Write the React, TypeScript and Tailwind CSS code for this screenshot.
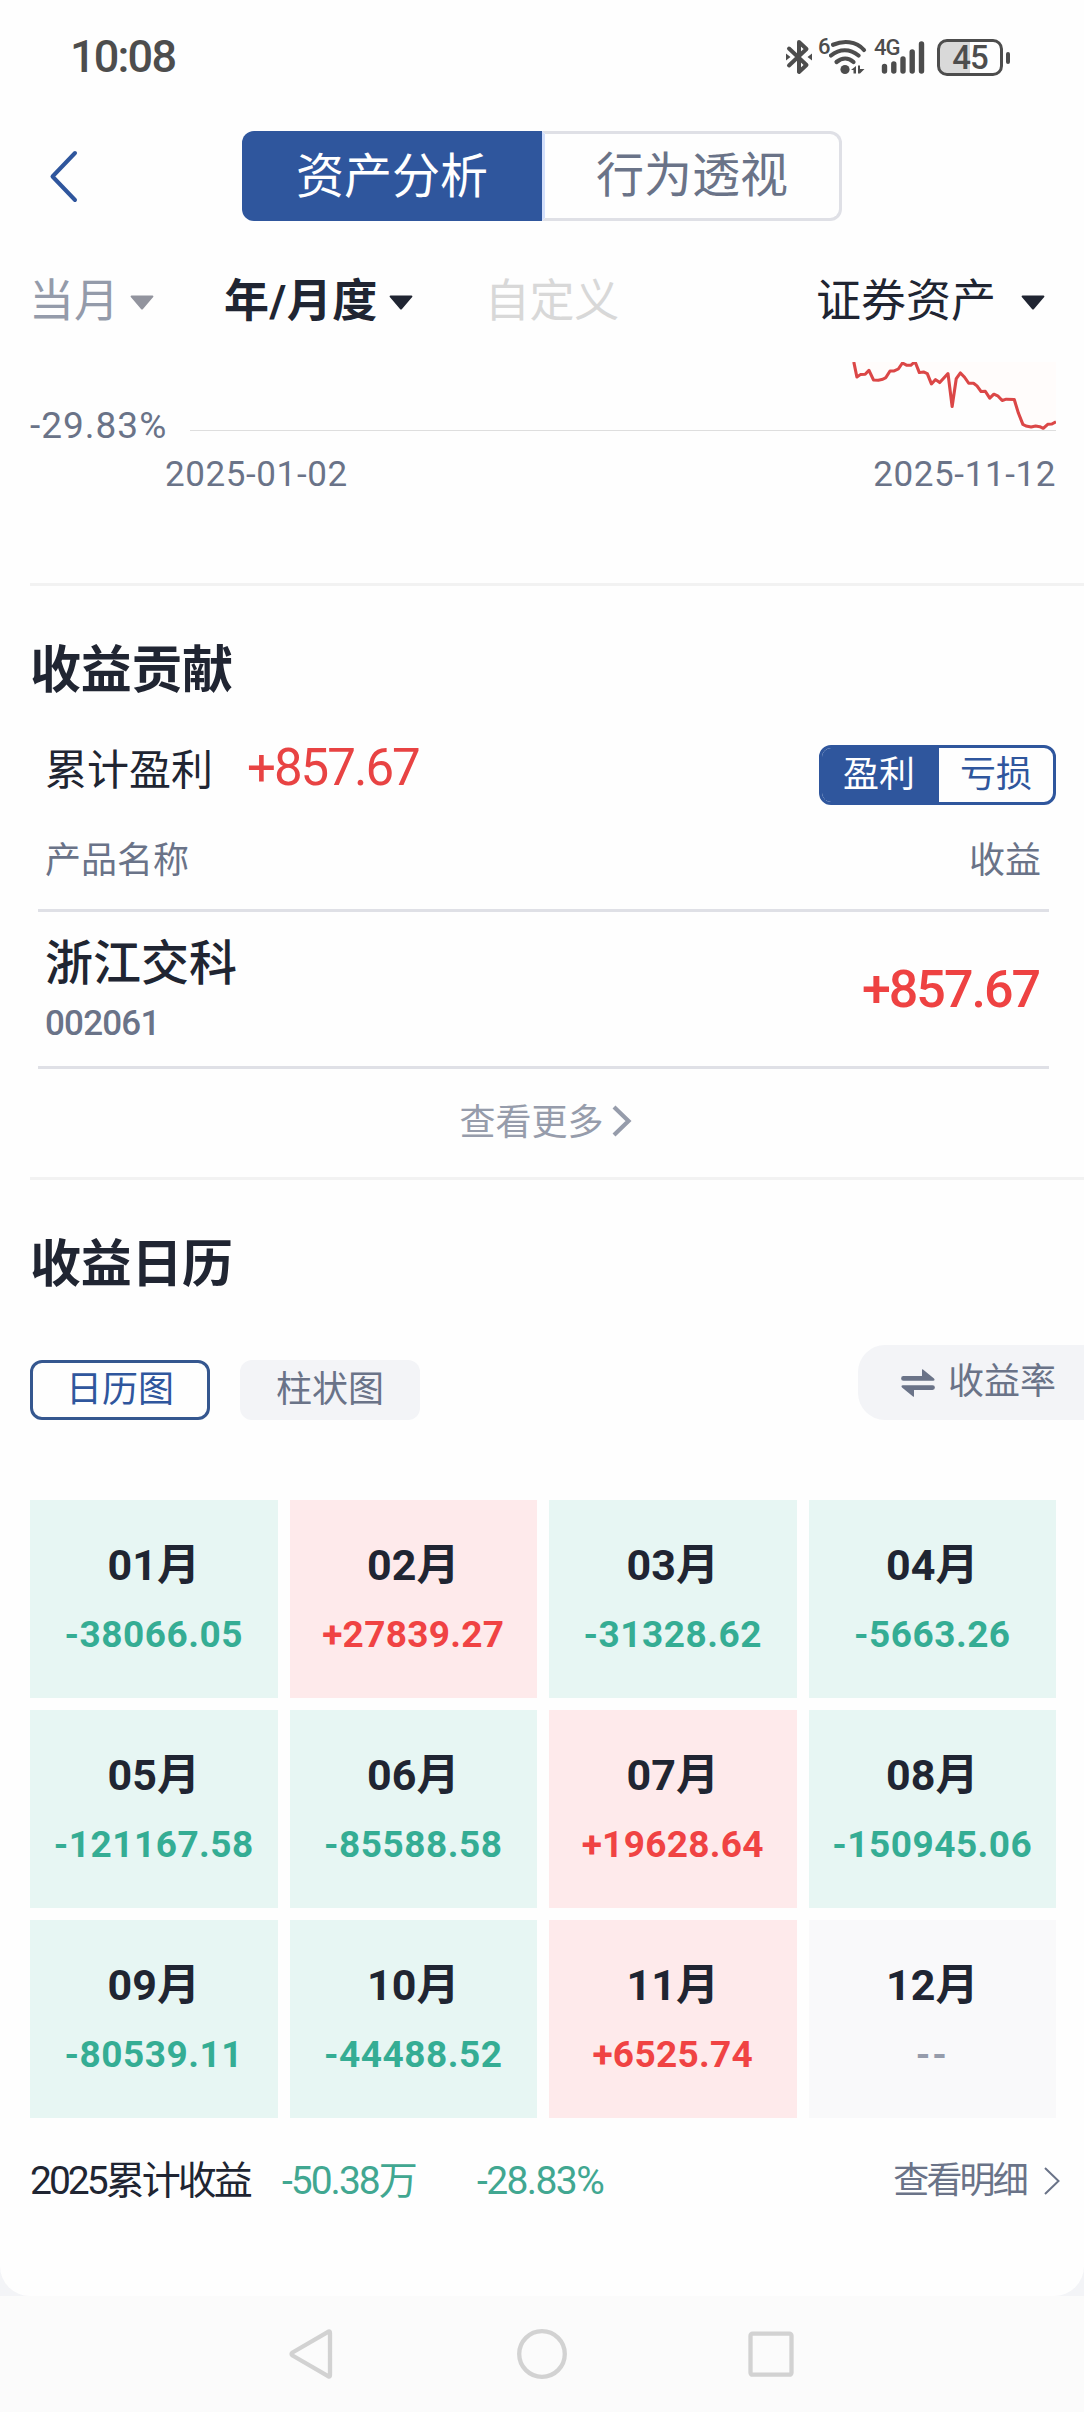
import React from "react";
import clsx from "clsx";

const months = [
  { name: "01月", value: "-38066.05" },
  { name: "02月", value: "+27839.27" },
  { name: "03月", value: "-31328.62" },
  { name: "04月", value: "-5663.26" },
  { name: "05月", value: "-121167.58" },
  { name: "06月", value: "-85588.58" },
  { name: "07月", value: "+19628.64" },
  { name: "08月", value: "-150945.06" },
  { name: "09月", value: "-80539.11" },
  { name: "10月", value: "-44488.52" },
  { name: "11月", value: "+6525.74" },
  { name: "12月", value: "--" },
];

const trend =
  "11,0 20,45 30,38 44,37 55,25 68,54 82,55 95,52 104,47 116,27 128,27 140,21 152,3 165,10 176,10 184,3 190,3 201,32 213,30 224,35 236,66 248,53 260,62 284,35 296,134 308,50 320,33 332,46 344,64 358,64 368,72 380,89 392,88 405,109 417,97 428,102 441,116 453,112 476,113 488,154 501,188 510,193 525,196 538,193 550,195 560,200 573,188 585,187 597,180";

const Caret = ({ className }: { className?: string }) => (
  <svg width="24" height="15" viewBox="0 0 24 15" className={className}>
    <path d="M1.5 0.5h21a1 1 0 0 1 .7 1.6L13 13.9a1.4 1.4 0 0 1-2 0L.8 2.1A1 1 0 0 1 1.5.5z" fill="currentColor" />
  </svg>
);

const StatusBar = () => (
  <div className="flex h-[114px] items-center justify-between pl-[70px] pr-[74px] text-[#4d4d4d]">
    <span className="text-[45px] font-medium leading-[60px] tracking-[-1.8px]">10:08</span>
    <div className="flex h-[36px] items-start">
      {/* bluetooth */}
      <svg width="26" height="36" viewBox="0 0 26 36" fill="none" className="mr-[6px]">
        <path d="M3 9.5 20.5 26 13 33V3l7.500 7L3 26.500" stroke="currentColor" strokeWidth="4" strokeLinejoin="round" strokeLinecap="round" />
        <path d="M0 14.500v7l4.500-3.500zM26 14.500v7l-4.500-3.500z" fill="currentColor" />
      </svg>
      <span className="-mt-[4px] w-[11px] text-[22px] font-medium leading-[24px]">6</span>
      <svg width="38" height="36" viewBox="0 0 38 36" fill="none">
        <g stroke="currentColor" strokeWidth="4.200" strokeLinecap="round">
          <path d="M4 5.700C14 1.500 27 1.500 35 11" />
          <path d="M2 16.500c8.500-7 19-7 27.500 0" />
          <path d="M7.500 23c5.500-4.500 12-4.500 17 0" />
        </g>
        <circle cx="16" cy="30.500" r="4.600" fill="currentColor" />
        <path d="M22 31l5-4v7.500h-2.500V31zM29 26.500h2v3.500h4.500l-4.500 4.500h-2z" fill="currentColor" />
      </svg>
      <div className="relative ml-[7px] h-[36px] w-[54px]">
        <span className="absolute -top-[4px] left-0 text-[22px] font-medium leading-[26px] tracking-[-1px]">4G</span>
        <svg width="54" height="36" viewBox="0 0 54 36">
          <g stroke="currentColor" strokeWidth="5.400" strokeLinecap="round">
            <path d="M10.500 27.500v4.500M19.800 25v7M29 20v12M38.200 13v19M47.500 5v27" />
          </g>
        </svg>
      </div>
      <div className="ml-[9px] flex items-center">
        <div className="flex h-[37px] w-[66px] items-center justify-center rounded-[10px] border-[3px] border-[#4d4d4d] bg-[linear-gradient(90deg,#d9d9d9_50%,transparent_50%)] text-[33px] font-medium leading-[33px] tracking-[-1px]">
          45
        </div>
        <div className="ml-[3px] h-[12px] w-[4px] rounded-full bg-[#4d4d4d]"></div>
      </div>
    </div>
  </div>
);

const Header = () => (
  <div className="flex h-[124px] items-center">
    <svg width="30" height="54" viewBox="0 0 30 54" fill="none" className="ml-[49px]">
      <path d="M26 4 3.500 27.500 26 51" stroke="#2f569d" strokeWidth="4" strokeLinecap="round" strokeLinejoin="round" />
    </svg>
    <div className="ml-[163px] flex h-[90px] w-[600px] text-[48px] leading-[92px]">
      <div className="w-[300px] rounded-l-[12px] bg-[#2f569d] text-center text-white">资产分析</div>
      <div className="flex w-[300px] items-center justify-center rounded-r-[12px] border-[3px] border-[#dfe0e6] border-l-[#d3dffb] text-[#6a7388]">
        行为透视
      </div>
    </div>
  </div>
);

const Filters = () => (
  <div className="flex h-[124px] items-center pl-[29px] pr-[39px] pt-1 text-[45px] leading-[60px]">
    <span className="text-[#949baa]">当月</span>
    <Caret className="ml-[11px] text-[#92949e]" />
    <span className="ml-[70px] font-bold tracking-[0.5px] text-[#202532]">年/月度</span>
    <Caret className="ml-[11px] text-[#202532]" />
    <span className="ml-[72px] tracking-[-0.2px] text-[#d8d8d8]">自定义</span>
    <span className="ml-auto text-[#202532]">证券资产</span>
    <Caret className="ml-[25px] text-[#202532]" />
  </div>
);

const Trend = () => (
  <div className="h-[221px] pr-[28px] text-[#6a7388]">
    <div className="flex h-[69px] items-end">
      <span className="-mb-[15px] w-[190px] pl-[30px] text-[37px] leading-[40px] tracking-[1px]">-29.83%</span>
      <div className="flex h-[69px] flex-1 justify-end border-b border-[#dedede]">
        <svg width="206" height="68" viewBox="0 0 597 205" preserveAspectRatio="none" fill="none">
          <polygon points={trend + " 597,0"} fill="#fffcfb" />
          <polyline points={trend} stroke="#db4747" strokeWidth="9" strokeLinejoin="round" />
        </svg>
      </div>
    </div>
    <div className="mt-[19px] flex justify-between pl-[165px] text-[35px] leading-[50px] tracking-[0.6px]">
      <span>2025-01-02</span>
      <span>2025-11-12</span>
    </div>
  </div>
);

const Contribution = () => (
  <div className="pr-[28px]">
    <div className="-mr-[28px] ml-[30px] border-t-[3px] border-[#f2f2f2]"></div>
    <h2 className="pl-[30px] pt-[51px] text-[51px] font-bold leading-[68px] tracking-[-0.3px] text-[#202532]">收益贡献</h2>
    <div className="mt-[40px] flex h-[60px] items-start pl-[45px]">
      <span className="text-[42px] leading-[52px] text-[#202532]">累计盈利</span>
      <span className="ml-[34px] text-[51px] leading-[46px] tracking-[-2px] text-[#e84343]">+857.67</span>
      <div className="ml-auto flex h-[60px] w-[237px] overflow-hidden rounded-[12px] border-[3px] border-[#2f569d] text-center text-[36px] leading-[54px]">
        <div className="w-[117px] bg-[#2f569d] pr-[3px] text-white">盈利</div>
        <div className="flex-1 text-[#2f569d]">亏损</div>
      </div>
    </div>
    <div className="ml-[38px] mr-[7px]">
      <div className="flex h-[107px] items-center justify-between border-b-[3px] border-[#dfe0e6] pl-[7px] pr-[8px] pt-[7px] text-[36px] text-[#6a7388]">
        <span>产品名称</span>
        <span>收益</span>
      </div>
      <div className="flex h-[157px] items-start justify-between border-b-[3px] border-[#dfe0e6] pl-[7px] pr-[10px] pt-[22px] leading-[60px]">
        <div>
          <div className="text-[48px] font-medium text-[#202532]">浙江交科</div>
          <div className="text-[35px] font-medium tracking-[-0.8px] text-[#6a7388]">002061</div>
        </div>
        <span className="mt-[26px] text-[52px] font-medium tracking-[-2px] text-[#ee4242]">+857.67</span>
      </div>
    </div>
    <div className="flex h-[108px] items-center justify-center pl-[35px] text-[36px] text-[#969cab]">
      <span>查看更多</span>
      <svg width="20" height="32" viewBox="0 0 20 32" fill="none" className="-mt-1 ml-[8px]">
        <path d="M2 2l14.500 14L2 30" stroke="currentColor" strokeWidth="4.200" />
      </svg>
    </div>
  </div>
);

const Calendar = () => (
  <div>
    <div className="ml-[30px] border-t-[3px] border-[#f2f2f2]"></div>
    <h2 className="pl-[30px] pt-[51px] text-[51px] font-bold leading-[68px] tracking-[-0.3px] text-[#202532]">收益日历</h2>
    <div className="mt-[46px] flex h-[75px] items-end pl-[30px] text-center text-[36px]">
      <div className="h-[60px] w-[180px] rounded-[12px] border-[3px] border-[#35578f] leading-[54px] text-[#2f569d]">日历图</div>
      <div className="ml-[30px] h-[60px] w-[180px] rounded-[12px] bg-[#f3f4f7] leading-[60px] text-[#6a7388]">柱状图</div>
      <div className="ml-auto flex h-[75px] w-[226px] items-center rounded-l-[27px] bg-[#f3f4f7] pl-[43px] text-[#6a7388]">
        <svg width="34" height="28" viewBox="0 0 34 28">
          <path d="M2.500 7H21V.8q0-1 1-.3L33 9.500q1.500 2-1 2.300H2.500a2.400 2.400 0 0 1 0-4.800zM31.500 21H13v6.200q0 1-1 .3L1 18.500q-1.500-2 1-2.300h29.500a2.400 2.400 0 0 1 0 4.800z" fill="currentColor" />
        </svg>
        <span className="-mt-[2px] ml-[13px]">收益率</span>
      </div>
    </div>
    <div className="ml-[30px] mr-[28px] mt-[80px] grid grid-cols-4 gap-3 text-center font-bold">
      {months.map((m) => {
        const empty = m.value === "--";
        const up = m.value.startsWith("+");
        return (
          <div
            key={m.name}
            className={clsx("h-[198px] pt-[40px] leading-[50px]", empty ? "bg-[#f9f9fa]" : up ? "bg-[#feeaeb]" : "bg-[#e7f6f3]")}
          >
            <div className="text-[43px] text-[#202532]">{m.name}</div>
            <div
              className={clsx(
                "mt-[20px] text-[37px]",
                empty ? "tracking-[2px] text-[#969cab]" : up ? "tracking-[0.3px] text-[#f04343]" : "tracking-[0.5px] text-[#35ad94]"
              )}
            >
              {m.value}
            </div>
          </div>
        );
      })}
    </div>
    <div className="flex h-[126px] items-center pl-[30px] pr-[24px] text-[39px] tracking-[-3px]">
      <span className="w-[252px] text-[#202532]">2025累计收益</span>
      <span className="w-[195px] tracking-[-2px] text-[#41a791]">-50.38万</span>
      <span className="tracking-[-1.6px] text-[#41a791]">-28.83%</span>
      <span className="ml-auto text-[36px] tracking-[-2.8px] text-[#6a7388]">查看明细</span>
      <svg width="16" height="28" viewBox="0 0 16 28" fill="none" className="ml-[18px]">
        <path d="M1 1l13.500 13L1 27" stroke="#6a7388" strokeWidth="2" />
      </svg>
    </div>
  </div>
);

const NavBar = () => (
  <div className="flex h-[116px] items-center bg-[#fbfbfb] pl-[289px]">
    <svg width="506" height="50" viewBox="0 0 506 50" fill="none" stroke="#d2d2d2" strokeWidth="4.300" strokeLinejoin="round">
      <path d="M39.500 2.600Q41 2 41 4v42q0 2-1.500 1.400L3.500 26.500q-2-1.500 0-3z" />
      <circle cx="253" cy="25" r="22.800" />
      <rect x="461.500" y="4.700" width="41" height="41" rx="2" />
    </svg>
  </div>
);

const App = () => {
  return (
    <div className="h-[2412px] w-[1084px] overflow-hidden whitespace-nowrap bg-[#f3f4f7] font-['Roboto','Noto_Sans_CJK_SC',sans-serif]">
      <div className="h-[2296px] rounded-b-[30px] bg-[#fefefe]">
        <StatusBar />
        <Header />
        <Filters />
        <Trend />
        <Contribution />
        <Calendar />
      </div>
      <NavBar />
    </div>
  );
};

export default App;
